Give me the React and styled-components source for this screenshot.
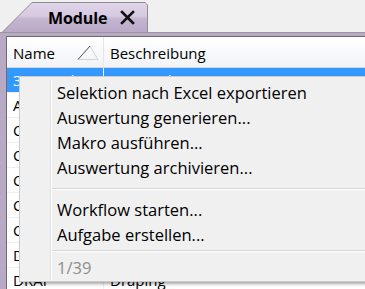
import React from "react";
import styled, { createGlobalStyle } from "styled-components";

const GlobalStyle = createGlobalStyle`
  html, body {
    margin: 0;
    padding: 0;
    background: #f0f0f0;
    overflow: hidden;
  }
  body {
    font-family: "Open Sans", "Noto Sans", sans-serif;
  }
`;

const Screen = styled.div`
  position: relative;
  width: 365px;
  height: 289px;
  overflow: hidden;
  background: #f0f0f0;
`;

const TabBar = styled.div`
  height: 32px;
  display: flex;
  align-items: flex-end;
  padding-left: 2px;
  box-sizing: border-box;
`;

const TabOutline = styled.div`
  width: 146px;
  height: 30px;
  background: #8e8e8e;
  clip-path: polygon(30px 0, calc(100% - 3px) 0, 100% 3px, 100% 100%, 0 100%);
  display: flex;
`;

const TabFace = styled.div`
  flex: 1;
  margin: 1px 1px 0 1px;
  background: linear-gradient(#e0d5ea 0%, #d6c9e1 45%, #c4b5d1 55%, #baaac7 100%);
  clip-path: polygon(29px 0, calc(100% - 2px) 0, 100% 2px, 100% 100%, 0 100%);
  display: flex;
  align-items: center;
  padding-left: 45px;
  gap: 13px;
  box-sizing: border-box;
`;

const TabTitle = styled.span`
  font-weight: 700;
  font-size: 16px;
  color: #000;
  letter-spacing: -0.1px;
`;

const Frame = styled.div`
  background: #b8aac4;
  border-top: 1px solid #9d95a4;
  padding: 3px 0 0 6px;
  height: 256px;
`;

const Panel = styled.div`
  background: #fff;
  border-top: 1px solid #6c6c6c;
  border-left: 1px solid #6c6c6c;
  height: 100%;
`;

const Header = styled.div`
  display: grid;
  grid-template-columns: 97px 1fr;
  height: 30px;
  background: linear-gradient(#ffffff, #f1f3f6);
  border-bottom: 1px solid #d5d5d5;
`;

const HeaderCell = styled.div`
  display: flex;
  align-items: center;
  justify-content: space-between;
  padding: 2px 4px 0 6px;
  font-size: 15px;
  color: #000;
  border-right: ${(p) => (p.$divider ? "1px solid #e3e5e8" : "none")};
`;

const Row = styled.div`
  display: grid;
  grid-template-columns: 97px 1fr;
  height: 25px;
  box-sizing: border-box;
  border-bottom: 1px solid #f0f0f0;
  background: ${(p) => (p.$selected ? "#3399ff" : "#fff")};
  color: ${(p) => (p.$selected ? "#fff" : "#000")};
`;

const Cell = styled.div`
  display: flex;
  align-items: center;
  padding-left: 6px;
  font-size: 15px;
  white-space: nowrap;
  overflow: hidden;
  border-right: ${(p) =>
    p.$divider ? `1px solid ${p.$light ? "#ffffff" : "#f0f0f0"}` : "none"};
`;

const Menu = styled.div`
  position: absolute;
  left: 19px;
  top: 76px;
  width: 370px;
  background: #f0f0f0;
  border: 1px solid #cccccc;
  box-shadow: 2px 2px 3px rgba(0, 0, 0, 0.35);
  padding: 3px 0 1px 0;
  box-sizing: border-box;
`;

const MenuList = styled.div`
  margin-left: 30px;
  border-left: 1px solid #e2e2e2;
  box-shadow: inset 1px 0 0 #ffffff;
  display: flex;
  flex-direction: column;
`;

const MenuItem = styled.div`
  height: 25px;
  display: flex;
  align-items: center;
  padding-left: 6px;
  font-size: 16.5px;
  color: ${(p) => (p.$disabled ? "#8d8d8d" : "#000")};
  white-space: nowrap;
`;

const Separator = styled.div`
  height: 1px;
  margin: ${(p) => (p.$tight ? "3px 0 3px 1px" : "8px 0 7px 1px")};
  background: #d7d7d7;
  border-bottom: 1px solid #ffffff;
`;

const SortArrow = () => (
  <svg width="22" height="16" viewBox="0 0 22 16">
    <polygon points="1,14.5 13,1 21,14.5" fill="none" stroke="#d2d2d2" strokeWidth="1" />
    <line x1="1" y1="14.5" x2="13" y2="1" stroke="#5c5c5c" strokeWidth="1" />
  </svg>
);

const CloseIcon = () => (
  <svg width="15" height="15" viewBox="0 0 15 15">
    <path d="M2 2 L13 13 M13 2 L2 13" stroke="#111" strokeWidth="2.6" strokeLinecap="square" />
  </svg>
);

const rows = [
  ["3D-Druck", "3D-Druck"],
  ["Abkanten", "Abkanten"],
  ["CNC-Drehen", "CNC-Drehen"],
  ["CNC-Fräsen", "CNC-Fräsen"],
  ["CNC-Schleifen", "CNC-Schleifen"],
  ["Crimpen", "Crimpen"],
  ["CAD", "CAD"],
  ["Datenimport", "Datenimport"],
  ["DRAP", "Draping"],
];

export default function App() {
  return (
    <Screen>
      <GlobalStyle />
      <TabBar>
        <TabOutline>
          <TabFace>
            <TabTitle>Module</TabTitle>
            <CloseIcon />
          </TabFace>
        </TabOutline>
      </TabBar>
      <Frame>
        <Panel>
          <Header>
            <HeaderCell $divider>
              Name
              <SortArrow />
            </HeaderCell>
            <HeaderCell>Beschreibung</HeaderCell>
          </Header>
          {rows.map(([name, desc], i) => (
            <Row key={name} $selected={i === 0}>
              <Cell $divider $light={i === 0}>{name}</Cell>
              <Cell>{desc}</Cell>
            </Row>
          ))}
        </Panel>
      </Frame>
      <Menu>
        <MenuList>
          <MenuItem>Selektion nach Excel exportieren</MenuItem>
          <MenuItem>Auswertung generieren...</MenuItem>
          <MenuItem>Makro ausführen...</MenuItem>
          <MenuItem>Auswertung archivieren...</MenuItem>
          <Separator />
          <MenuItem>Workflow starten...</MenuItem>
          <MenuItem>Aufgabe erstellen...</MenuItem>
          <Separator $tight />
          <MenuItem $disabled>1/39</MenuItem>
        </MenuList>
      </Menu>
    </Screen>
  );
}
